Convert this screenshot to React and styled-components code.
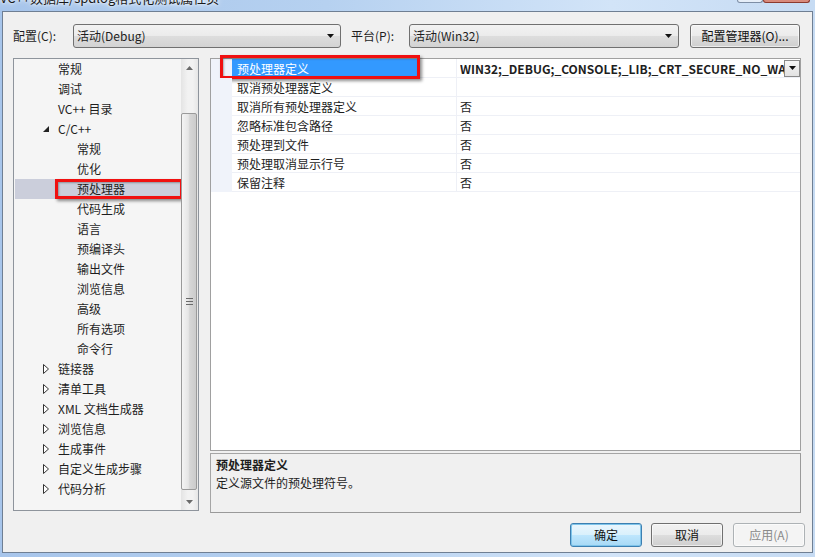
import React from "react";
import styled, { createGlobalStyle } from "styled-components";

const GlobalStyle = createGlobalStyle`
  html, body { margin: 0; padding: 0; background: #a9c6ea; }
  body {
    font-family: "Noto Sans CJK SC", "Microsoft YaHei", sans-serif;
    font-size: 12px;
    color: #1e1e1e;
  }
  #root { width: 815px; height: 557px; overflow: hidden; }
  * { box-sizing: border-box; }
`;

const Window = styled.div`
  width: 815px;
  height: 557px;
  display: flex;
  flex-direction: column;
  background: linear-gradient(90deg, #a7c5eb 0%, #b6d1f0 40%, #d2e4f8 75%, #c6dbf3 100%);
`;

const TitleBar = styled.div`
  height: 11px;
  flex-shrink: 0;
  display: flex;
  align-items: flex-start;
  overflow: hidden;
`;

const TitleText = styled.div`
  margin-top: -10px;
  font-size: 13px;
  line-height: 15px;
  white-space: nowrap;
  color: #1a1a1a;
  text-shadow: 0 0 6px #fff, 0 0 3px #fff;
`;

const WindowControls = styled.div`
  margin-left: auto;
  margin-right: 5px;
  display: flex;
`;

const CtrlButton = styled.div`
  width: ${(p) => p.w}px;
  height: 3px;
  border: 1px solid ${(p) => (p.close ? "#8c3a2e" : "#7d8ea5")};
  border-top: none;
  border-radius: 0 0 3px 3px;
  background: ${(p) => (p.close ? "#d88a7c" : "#e6eef8")};
`;

const Client = styled.div`
  flex: 1;
  margin: 0 2px 4px 2px;
  border: 1px solid #6f7f93;
  background: #f0f0f0;
  display: flex;
  flex-direction: column;
  padding: 12px 11px 0 10px;
`;

const TopRow = styled.div`
  display: flex;
  align-items: center;
  height: 24px;
`;

const Label = styled.div`
  width: ${(p) => p.w}px;
  flex-shrink: 0;
  line-height: 24px;
`;

const Combo = styled.div`
  width: ${(p) => p.w}px;
  height: 24px;
  flex-shrink: 0;
  border: 1px solid #707070;
  border-radius: 3px;
  background: linear-gradient(#f2f2f2 0%, #ebebeb 50%, #dddddd 51%, #d3d3d3 100%);
  display: flex;
  align-items: center;
  padding: 0 6px 0 3px;
  margin-right: ${(p) => p.mr || 0}px;
`;

const ComboText = styled.span`
  flex: 1;
  line-height: 22px;
`;

const Arrow = () => (
  <svg width="7" height="4" viewBox="0 0 7 4">
    <path d="M0 0H7L3.5 4Z" fill="#111" />
  </svg>
);

const Button = styled.div`
  width: ${(p) => p.w}px;
  height: 24px;
  flex-shrink: 0;
  border: 1px solid ${(p) => (p.primary ? "#3c7fb1" : p.disabled ? "#adb2b5" : "#707070")};
  border-radius: 3px;
  background: ${(p) =>
    p.primary
      ? "linear-gradient(#eaf6fd 0%, #d9f0fc 50%, #bee6fd 51%, #a7d9f5 100%)"
      : p.disabled
      ? "#f4f4f4"
      : "linear-gradient(#f2f2f2 0%, #ebebeb 50%, #dddddd 51%, #cfcfcf 100%)"};
  color: ${(p) => (p.disabled ? "#8a8a8a" : "#111")};
  display: flex;
  align-items: center;
  justify-content: center;
  line-height: 22px;
  margin-right: ${(p) => p.mr || 0}px;
  box-shadow: ${(p) => (p.primary ? "inset 0 0 0 1px #7ec4ea" : "inset 0 0 0 1px rgba(255,255,255,0.6)")};
`;

const MainArea = styled.div`
  display: flex;
  gap: 11px;
  margin-top: 10px;
`;

const TreePanel = styled.div`
  width: 186px;
  height: 453px;
  border: 1px solid #8e949c;
  background: #f5f5f5;
  display: flex;
`;

const TreeList = styled.div`
  flex: 1;
  display: flex;
  flex-direction: column;
  padding-left: 1px;
  overflow: hidden;
`;

const TreeRow = styled.div`
  position: relative;
  height: 20px;
  flex-shrink: 0;
  display: flex;
  align-items: center;
  padding-left: ${(p) => p.level * 19 + 9}px;
  background: ${(p) => (p.selected ? "#cbcedb" : "transparent")};
  line-height: 20px;
  white-space: nowrap;
`;

const Expander = styled.span`
  width: 15px;
  flex-shrink: 0;
  display: flex;
  align-items: center;
`;

const Annotation = styled.div`
  position: absolute;
  left: ${(p) => p.x}px;
  top: ${(p) => p.y}px;
  width: ${(p) => p.w}px;
  height: ${(p) => p.h}px;
  border: 3px solid #f01010;
  box-shadow: 2px 2px 3px rgba(0, 0, 0, 0.45), inset 1px 1px 2px rgba(0, 0, 0, 0.3);
  pointer-events: none;
`;

const ScrollBar = styled.div`
  width: 17px;
  flex-shrink: 0;
  display: flex;
  flex-direction: column;
  background: linear-gradient(90deg, #e4e4e4, #f2f2f2 40%, #f2f2f2 70%, #e6e6e6);
`;

const ScrollArrow = styled.div`
  height: 17px;
  display: flex;
  align-items: center;
  justify-content: center;
`;

const ScrollTrack = styled.div`
  flex: 1;
  display: flex;
  flex-direction: column;
  padding: 37px 0 3px 0;
`;

const Thumb = styled.div`
  flex: 1;
  margin: 0 1px 0 0;
  border: 1px solid #9a9a9a;
  border-radius: 2px;
  background: linear-gradient(90deg, #f4f4f4 0%, #e6e6e6 45%, #d6d6d6 55%, #cbcbcb 100%);
  display: flex;
  align-items: center;
  justify-content: center;
`;

const RightColumn = styled.div`
  width: 591px;
  display: flex;
  flex-direction: column;
  gap: 2px;
`;

const Grid = styled.div`
  height: 393px;
  border: 1px solid #a0a0a0;
  background: #fff;
  display: flex;
  flex-direction: column;
`;

const GridRow = styled.div`
  position: relative;
  height: 19px;
  display: flex;
  flex-shrink: 0;
`;

const Gutter = styled.div`
  width: 21px;
  flex-shrink: 0;
  background: #f0f3fa;
`;

const NameCell = styled.div`
  width: 225px;
  flex-shrink: 0;
  border-bottom: 1px solid #eef0f6;
  border-right: 1px solid #eef0f6;
  display: flex;
`;

const NameText = styled.div`
  width: ${(p) => (p.selected ? "186px" : "100%")};
  padding: 1px 0 0 5px;
  line-height: 17px;
  white-space: nowrap;
  background: ${(p) => (p.selected ? "#3399ff" : "transparent")};
  color: ${(p) => (p.selected ? "#fff" : "#1e1e1e")};
`;

const ValueCell = styled.div`
  flex: 1;
  min-width: 0;
  border-bottom: 1px solid #eef0f6;
  display: flex;
  align-items: center;
  padding-left: 3px;
  font-weight: ${(p) => (p.bold ? 700 : 400)};
`;

const ValueText = styled.span`
  flex: 1;
  min-width: 0;
  overflow: hidden;
  white-space: nowrap;
  padding-top: 1px;
  line-height: 17px;
`;

const DropButton = styled.div`
  width: 16px;
  height: 17px;
  flex-shrink: 0;
  border: 1px solid #8a8a8a;
  background: linear-gradient(#f7f7f7, #e2e2e2);
  display: flex;
  align-items: center;
  justify-content: center;
`;

const DescPanel = styled.div`
  height: 60px;
  border: 1px solid #a5a5a5;
  border-right-color: #9a9a9a;
  border-bottom-color: #9a9a9a;
  background: #f0f0f0;
  padding: 2px 5px;
  line-height: 18px;
`;

const DescTitle = styled.div`
  font-weight: 700;
`;

const ButtonRow = styled.div`
  display: flex;
  justify-content: flex-end;
  gap: 9px;
  margin-top: 10px;
  margin-right: -4px;
`;

const ExpandedIcon = () => (
  <svg width="6" height="6" viewBox="0 0 6 6">
    <path d="M6 0V6H0Z" fill="#222" />
  </svg>
);

const CollapsedIcon = () => (
  <svg width="6" height="10" viewBox="0 0 6 10">
    <path d="M0.5 0.5L5.5 5L0.5 9.5Z" fill="#fff" stroke="#333" strokeWidth="1" />
  </svg>
);

const ArrowUp = () => (
  <svg width="7" height="4" viewBox="0 0 7 4">
    <path d="M0 4H7L3.5 0Z" fill="#6b6b6b" />
  </svg>
);

const ArrowDown = () => (
  <svg width="7" height="4" viewBox="0 0 7 4">
    <path d="M0 0H7L3.5 4Z" fill="#6b6b6b" />
  </svg>
);

const Grip = () => (
  <svg width="7" height="7" viewBox="0 0 7 7">
    <path d="M0 0.5H7M0 3.5H7M0 6.5H7" stroke="#6a6a6a" strokeWidth="1" />
  </svg>
);

const treeItems = [
  { label: "常规", level: 1 },
  { label: "调试", level: 1 },
  { label: "VC++ 目录", level: 1 },
  { label: "C/C++", level: 1, expander: "open" },
  { label: "常规", level: 2 },
  { label: "优化", level: 2 },
  { label: "预处理器", level: 2, selected: true },
  { label: "代码生成", level: 2 },
  { label: "语言", level: 2 },
  { label: "预编译头", level: 2 },
  { label: "输出文件", level: 2 },
  { label: "浏览信息", level: 2 },
  { label: "高级", level: 2 },
  { label: "所有选项", level: 2 },
  { label: "命令行", level: 2 },
  { label: "链接器", level: 1, expander: "closed" },
  { label: "清单工具", level: 1, expander: "closed" },
  { label: "XML 文档生成器", level: 1, expander: "closed" },
  { label: "浏览信息", level: 1, expander: "closed" },
  { label: "生成事件", level: 1, expander: "closed" },
  { label: "自定义生成步骤", level: 1, expander: "closed" },
  { label: "代码分析", level: 1, expander: "closed" },
];

const properties = [
  { name: "预处理器定义", value: "WIN32;_DEBUG;_CONSOLE;_LIB;_CRT_SECURE_NO_WARNINGS;%(PreprocessorDefinitions)", selected: true },
  { name: "取消预处理器定义", value: "" },
  { name: "取消所有预处理器定义", value: "否" },
  { name: "忽略标准包含路径", value: "否" },
  { name: "预处理到文件", value: "否" },
  { name: "预处理取消显示行号", value: "否" },
  { name: "保留注释", value: "否" },
];

export default function App() {
  return (
    <Window>
      <GlobalStyle />
      <TitleBar>
        <TitleText>VC++数据库/spdlog格式化测试属性页</TitleText>
        <WindowControls>
          <CtrlButton w={26} />
          <CtrlButton w={47} close />
        </WindowControls>
      </TitleBar>
      <Client>
        <TopRow>
          <Label w={60}>配置(C):</Label>
          <Combo w={268} mr={10}>
            <ComboText>活动(Debug)</ComboText>
            <Arrow />
          </Combo>
          <Label w={58}>平台(P):</Label>
          <Combo w={270} mr={11}>
            <ComboText>活动(Win32)</ComboText>
            <Arrow />
          </Combo>
          <Button w={110}>配置管理器(O)...</Button>
        </TopRow>

        <MainArea>
          <TreePanel>
            <TreeList>
              {treeItems.map((item, i) => (
                <TreeRow key={i} level={item.level} selected={item.selected}>
                  <Expander>
                    {item.expander === "open" && <ExpandedIcon />}
                    {item.expander === "closed" && <CollapsedIcon />}
                  </Expander>
                  {item.label}
                  {item.selected && <Annotation x={40} y={0} w={128} h={20} />}
                </TreeRow>
              ))}
            </TreeList>
            <ScrollBar>
              <ScrollArrow>
                <ArrowUp />
              </ScrollArrow>
              <ScrollTrack>
                <Thumb>
                  <Grip />
                </Thumb>
              </ScrollTrack>
              <ScrollArrow>
                <ArrowDown />
              </ScrollArrow>
            </ScrollBar>
          </TreePanel>

          <RightColumn>
            <Grid>
              {properties.map((p, i) => (
                <GridRow key={i}>
                  <Gutter />
                  <NameCell>
                    <NameText selected={p.selected}>{p.name}</NameText>
                  </NameCell>
                  <ValueCell bold={p.selected}>
                    <ValueText>{p.value}</ValueText>
                    {p.selected && (
                      <DropButton>
                        <Arrow />
                      </DropButton>
                    )}
                  </ValueCell>
                  {p.selected && <Annotation x={9} y={-4} w={200} h={24} />}
                </GridRow>
              ))}
            </Grid>
            <DescPanel>
              <DescTitle>预处理器定义</DescTitle>
              <div>定义源文件的预处理符号。</div>
            </DescPanel>
          </RightColumn>
        </MainArea>

        <ButtonRow>
          <Button w={72} primary>确定</Button>
          <Button w={72} mr={1}>取消</Button>
          <Button w={72} disabled>应用(A)</Button>
        </ButtonRow>
      </Client>
    </Window>
  );
}
